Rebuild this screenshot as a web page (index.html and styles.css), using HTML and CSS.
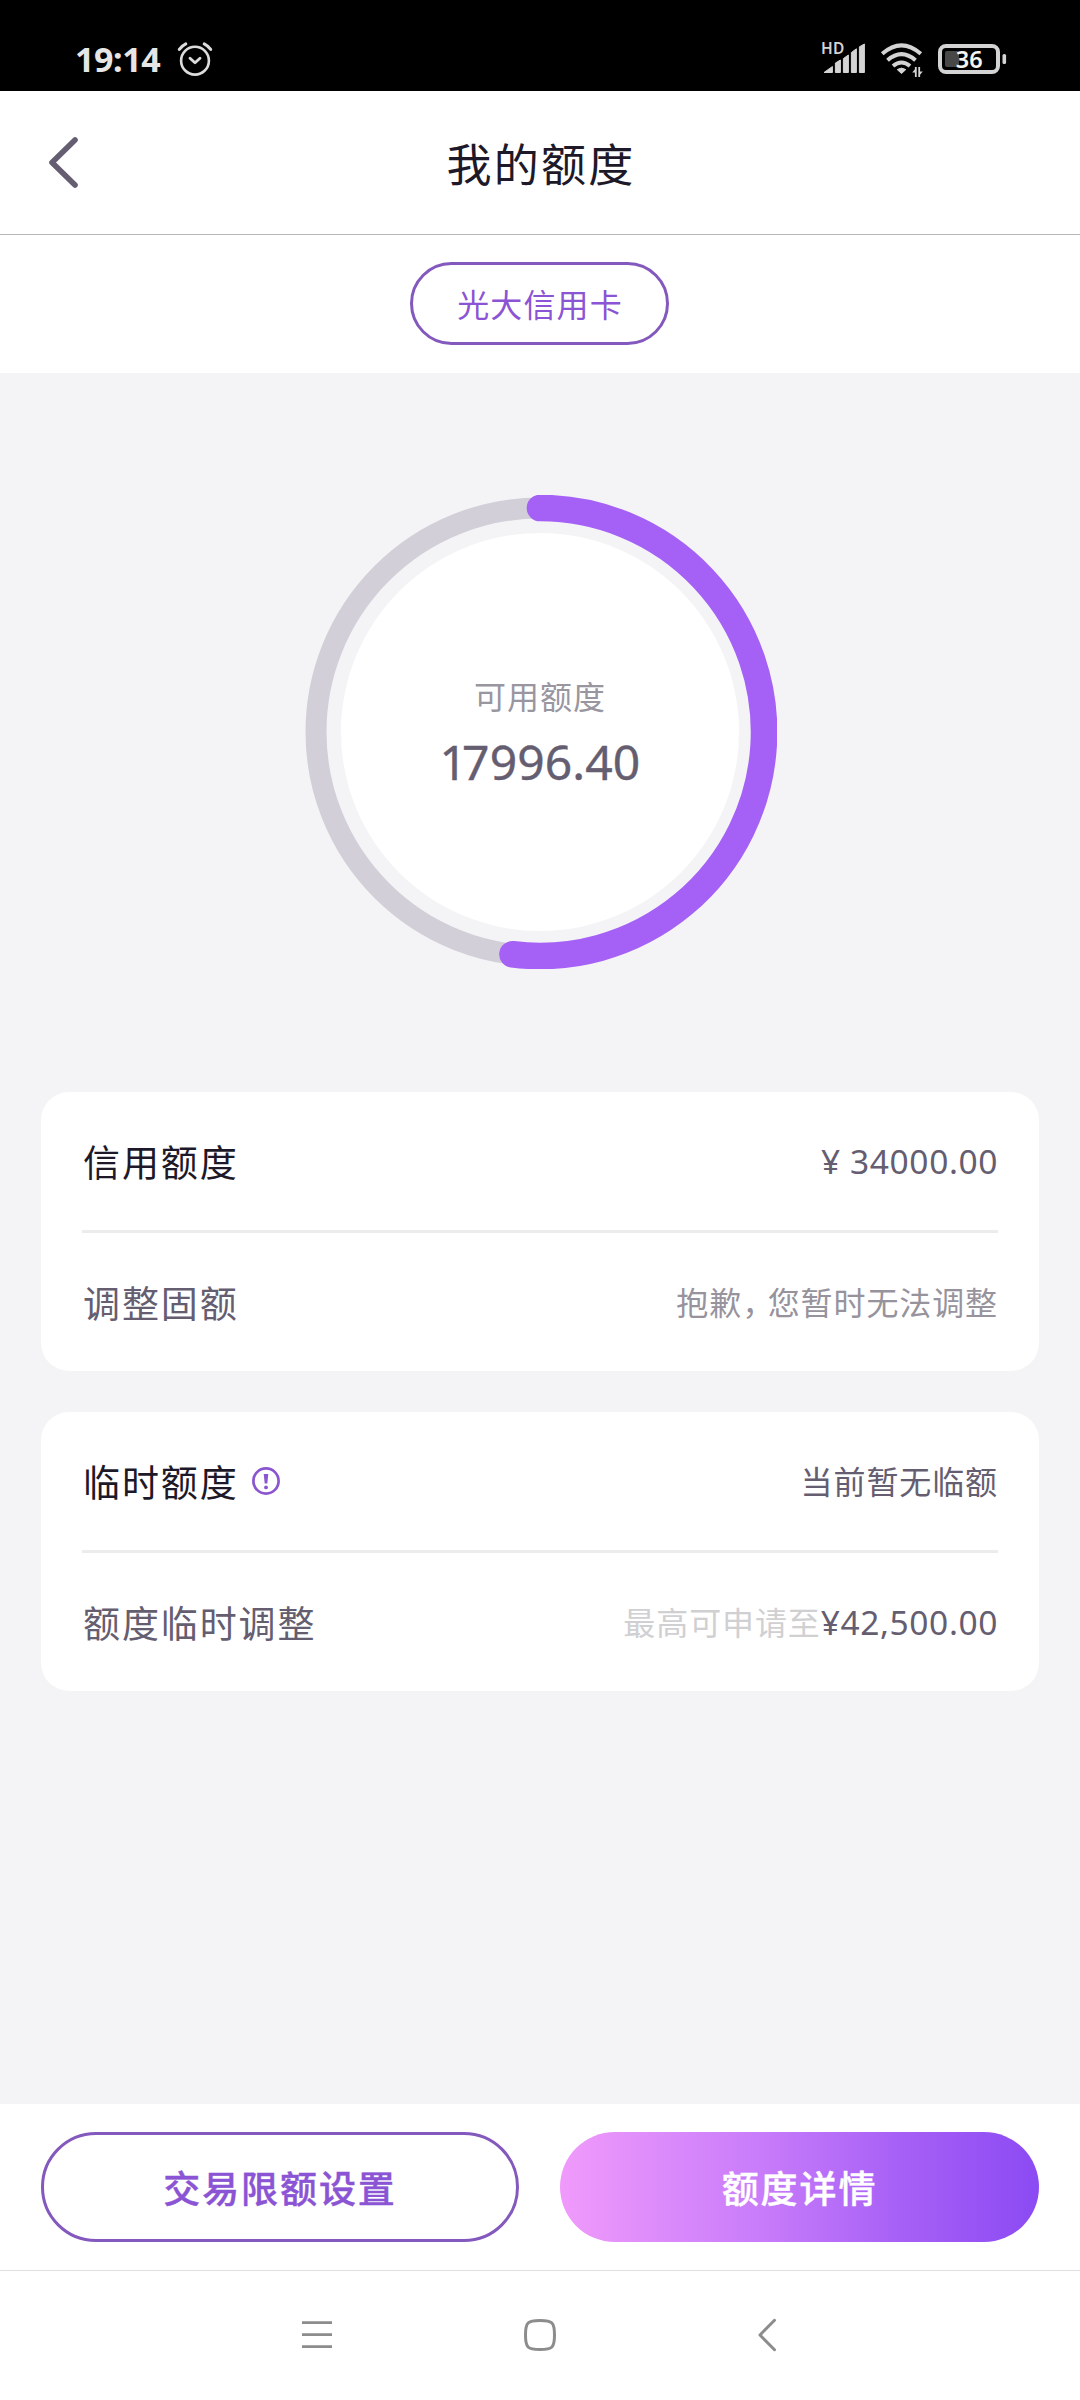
FILE: index.html
```html
<!DOCTYPE html>
<html lang="zh-CN">
<head>
<meta charset="utf-8">
<title>我的额度</title>
<link rel="stylesheet" href="styles.css">
</head>
<body>
<div class="screen">
  <div class="statusbar">
    <div class="status-left">
      <span class="clock">19:14</span>
      <svg class="alarm" width="36" height="36" viewBox="0 0 36 36" fill="none" stroke="#dcdcdc" stroke-linecap="round">
        <circle cx="18" cy="19.7" r="13.9" stroke-width="2.6"/>
        <path d="M13 17.2L18 21.8L23 17.2" stroke-width="2.8" stroke-linejoin="round"/>
        <path d="M2.3 8.4Q4.7 5 8.8 2.9M33.7 8.4Q31.3 5 27.2 2.9" stroke-width="3"/>
      </svg>
    </div>
    <div class="status-right">
      <div class="signal">
        <span class="hd">HD</span>
        <svg width="44" height="36" viewBox="0 0 44 36" fill="#d4d4d4" stroke="#d4d4d4" stroke-width="1" stroke-linejoin="round">
          <path d="M3 31.5L11.4 25.5V31.5ZM14.4 22L19.4 19V31.5H14.4ZM22.4 17.5L27.4 14V31.5H22.4ZM30.4 11.5L35.4 7.8V31.5H30.4ZM38.4 5.8L43.4 3V31.5H38.4Z"/>
        </svg>
      </div>
      <svg class="wifi" width="44" height="38" viewBox="0 0 44 38" fill="none" stroke="#d4d4d4">
        <path d="M2.2 12.8Q21.5 -4 40.8 12.8M7.5 19.2Q21.5 7 35.5 19.2M13 25Q21.5 18 30 25" stroke-width="4"/>
        <path d="M17.2 28.6Q21.5 25.6 25.8 28.6L21.5 32.5Z" fill="#d4d4d4" stroke-width="1" stroke-linejoin="round"/>
        <path d="M35.8 26V36M39.2 36V26" stroke-width="1.8"/>
        <path d="M32.2 31.5L36 27V31.5ZM39 30.5L42.8 30.5L39 35Z" fill="#d4d4d4" stroke="none"/>
      </svg>
      <svg class="battery" width="70" height="34" viewBox="0 0 70 34">
        <rect x="2" y="5" width="58" height="26" rx="6" fill="none" stroke="#d4d4d4" stroke-width="4"/>
        <rect x="7" y="10" width="14" height="16" rx="2" fill="#484848"/>
        <rect x="64.5" y="13" width="3.6" height="10" rx="1.6" fill="#d4d4d4"/>
        <text x="31.2" y="26.5" class="level">36</text>
      </svg>
    </div>
  </div>

  <header class="header">
    <svg class="back" width="36" height="56" viewBox="0 0 36 56" fill="none" stroke="#655d70" stroke-width="5.6" stroke-linecap="round" stroke-linejoin="round"><path d="M30 5L7 27.5L30 50"/></svg>
    <h1 class="title">我的额度</h1>
  </header>

  <div class="cardbar"><span class="pill">光大信用卡</span></div>

  <main class="main">
    <div class="gauge">
      <svg class="ring" width="474" height="474" viewBox="0 0 474 474" fill="none">
        <circle cx="237" cy="237" r="199" fill="#fff"/>
        <circle cx="237" cy="237" r="224" stroke="#d2cfd8" stroke-width="21"/>
        <path d="M237 13A224 224 0 1 1 209.5 459.3" stroke="#a561f6" stroke-width="26.6" stroke-linecap="round"/>
      </svg>
      <div class="gauge-text">
        <div class="gauge-label">可用额度</div>
        <div class="gauge-value"><span class="one">1</span>7996.40</div>
      </div>
    </div>

    <section class="card">
      <div class="row">
        <span class="label strong">信用额度</span>
        <span class="amount">¥ 34000.00</span>
      </div>
      <div class="row">
        <span class="label">调整固额</span>
        <span class="value muted">抱歉<span class="comma">，</span>您暂时无法调整</span>
      </div>
    </section>

    <section class="card">
      <div class="row">
        <span class="label strong">临时额度</span>
        <svg class="info" width="30" height="30" viewBox="0 0 30 30"><circle cx="15" cy="15" r="12.6" fill="none" stroke="#8a55cf" stroke-width="2.7"/><path d="M12.7 8H17.3L16.3 17.6H13.7Z" fill="#8a55cf"/><circle cx="15" cy="21.4" r="1.9" fill="#8a55cf"/></svg>
        <span class="value">当前暂无临额</span>
      </div>
      <div class="row">
        <span class="label">额度临时调整</span>
        <span class="value faint">最高可申请至</span><span class="amount joined">¥42,500.00</span>
      </div>
    </section>
  </main>

  <footer class="actions">
    <button class="btn outline">交易限额设置</button>
    <button class="btn filled">额度详情</button>
  </footer>

  <nav class="navbar">
    <svg width="32" height="36" viewBox="0 0 32 36" stroke="#8c8c8c" stroke-width="2.8"><path d="M1 5.7H31M1 17.7H31M1 29.7H31"/></svg>
    <svg width="36" height="36" viewBox="0 0 36 36" fill="none" stroke="#8c8c8c" stroke-width="3"><path d="M18 3.5C30.5 3.5 32.5 5.5 32.5 18S30.5 32.5 18 32.5S3.5 30.5 3.5 18S5.500 3.5 18 3.5Z"/></svg>
    <svg width="22" height="36" viewBox="0 0 22 36" fill="none" stroke="#8c8c8c" stroke-width="3" stroke-linecap="round" stroke-linejoin="round"><path d="M18.5 3.3L4 18L18.5 32.7"/></svg>
  </nav>
</div>
</body>
</html>
```
FILE: styles.css
```css
* { box-sizing: border-box; }
body { margin: 0; font-family: "Noto Sans CJK SC", sans-serif; background: #fff; }
svg { display: block; flex: none; }
.screen { width: 1080px; height: 2400px; display: flex; flex-direction: column; overflow: hidden; }

.statusbar { height: 91px; flex: none; background: #000; display: flex; justify-content: space-between; padding: 41px 72px 0 75px; }
.status-left, .status-right { display: flex; }
.clock { width: 102px; height: 36px; line-height: 36px; color: #e6e6e6; font-family: "Noto Sans", sans-serif; font-weight: 700; font-size: 34px; letter-spacing: -0.4px; }
.signal { display: grid; margin-right: 3px; }
.signal > * { grid-area: 1 / 1; }
.hd { color: #d4d4d4; font: 600 15.5px/18px "Noto Sans", sans-serif; letter-spacing: 0.2px; padding-left: 0; margin-top: -2px; }
.wifi { margin-left: 12px; }
.battery { margin-left: 14px; }
.level { font: 600 23.5px "Noto Sans", sans-serif; fill: #f4f4f4; text-anchor: middle; }

.header { height: 144px; flex: none; border-bottom: 1px solid #b8b8ba; display: grid; grid-template-columns: 100px 1fr 100px; align-items: center; }
.back { margin-left: 45px; }
.title { margin: 0 -2px 0 0; text-align: center; font-size: 45px; font-weight: 400; line-height: 60px; letter-spacing: 2.2px; color: #1d1928; }

.cardbar { height: 138px; flex: none; display: flex; justify-content: center; align-items: flex-start; padding: 27px 2px 0 0; }
.pill { width: 259px; height: 83px; padding-left: 2px; border: 3px solid #8459bd; border-radius: 42px; color: #8b54d4; font-size: 32px; line-height: 76px; letter-spacing: 1.1px; text-align: center; }

.main { flex: 1; background: #f4f4f6; padding: 122px 41px 0; display: flex; flex-direction: column; align-items: stretch; }
.gauge { width: 474px; height: 474px; align-self: center; display: grid; margin-bottom: 123px; }
.ring, .gauge-text { grid-area: 1 / 1; }
.gauge-text { text-align: center; padding-top: 177px; }
.gauge-label { color: #9996a0; font-size: 32px; line-height: 46px; letter-spacing: 1px; }
.gauge-value { margin-top: 14px; color: #655d70; font-family: "Noto Sans", sans-serif; font-size: 48px; line-height: 60px; letter-spacing: 0.1px; -webkit-text-stroke: 0.4px currentColor; }
.one { letter-spacing: -5px; }

.card { height: 279px; background: #fff; border-radius: 28px; padding: 0 41px; margin-bottom: 41px; }
.row { height: 138px; display: flex; align-items: center; }
.row + .row { height: 141px; border-top: 3px solid #ececed; }
.label { font-size: 37px; line-height: 50px; letter-spacing: 1.9px; color: #655d70; padding-left: 1px; }
.label.strong { color: #1d1928; }
.info { margin-left: 12px; }
.value, .amount { margin-left: auto; white-space: nowrap; color: #655d70; }
.value { font-size: 32px; line-height: 46px; letter-spacing: 0.9px; padding-bottom: 2px; }
.amount { font-family: "Noto Sans", sans-serif; font-size: 33.5px; line-height: 46px; letter-spacing: 0.6px; }
.amount.joined { margin-left: 0; }
.muted { color: #97939d; }
.faint { color: #d0d0d2; }
.comma { letter-spacing: -6.5px; }

.actions { height: 166px; flex: none; display: grid; grid-template-columns: 478px 479px; justify-content: space-between; align-items: center; padding: 0 41px; }
.btn { height: 110px; padding: 0 0 1px; border: 0; border-radius: 55px; font-family: inherit; font-size: 37px; font-weight: 500; letter-spacing: 1.9px; -webkit-text-stroke: 0.4px currentColor; }
.outline { border: 3px solid #8459bd; background: #fff; color: #8b54d4; }
.filled { background: linear-gradient(90deg, #f09afb 0%, #c87cfa 42%, #a861f6 70%, #8b4af3 100%); color: #fff; }

.navbar { height: 130px; flex: none; border-top: 1px solid #e0e0e0; display: grid; grid-template-columns: 1fr 36px 1fr; padding: 46px 302px 0 301px; }
.navbar > :last-child { justify-self: end; }
```
